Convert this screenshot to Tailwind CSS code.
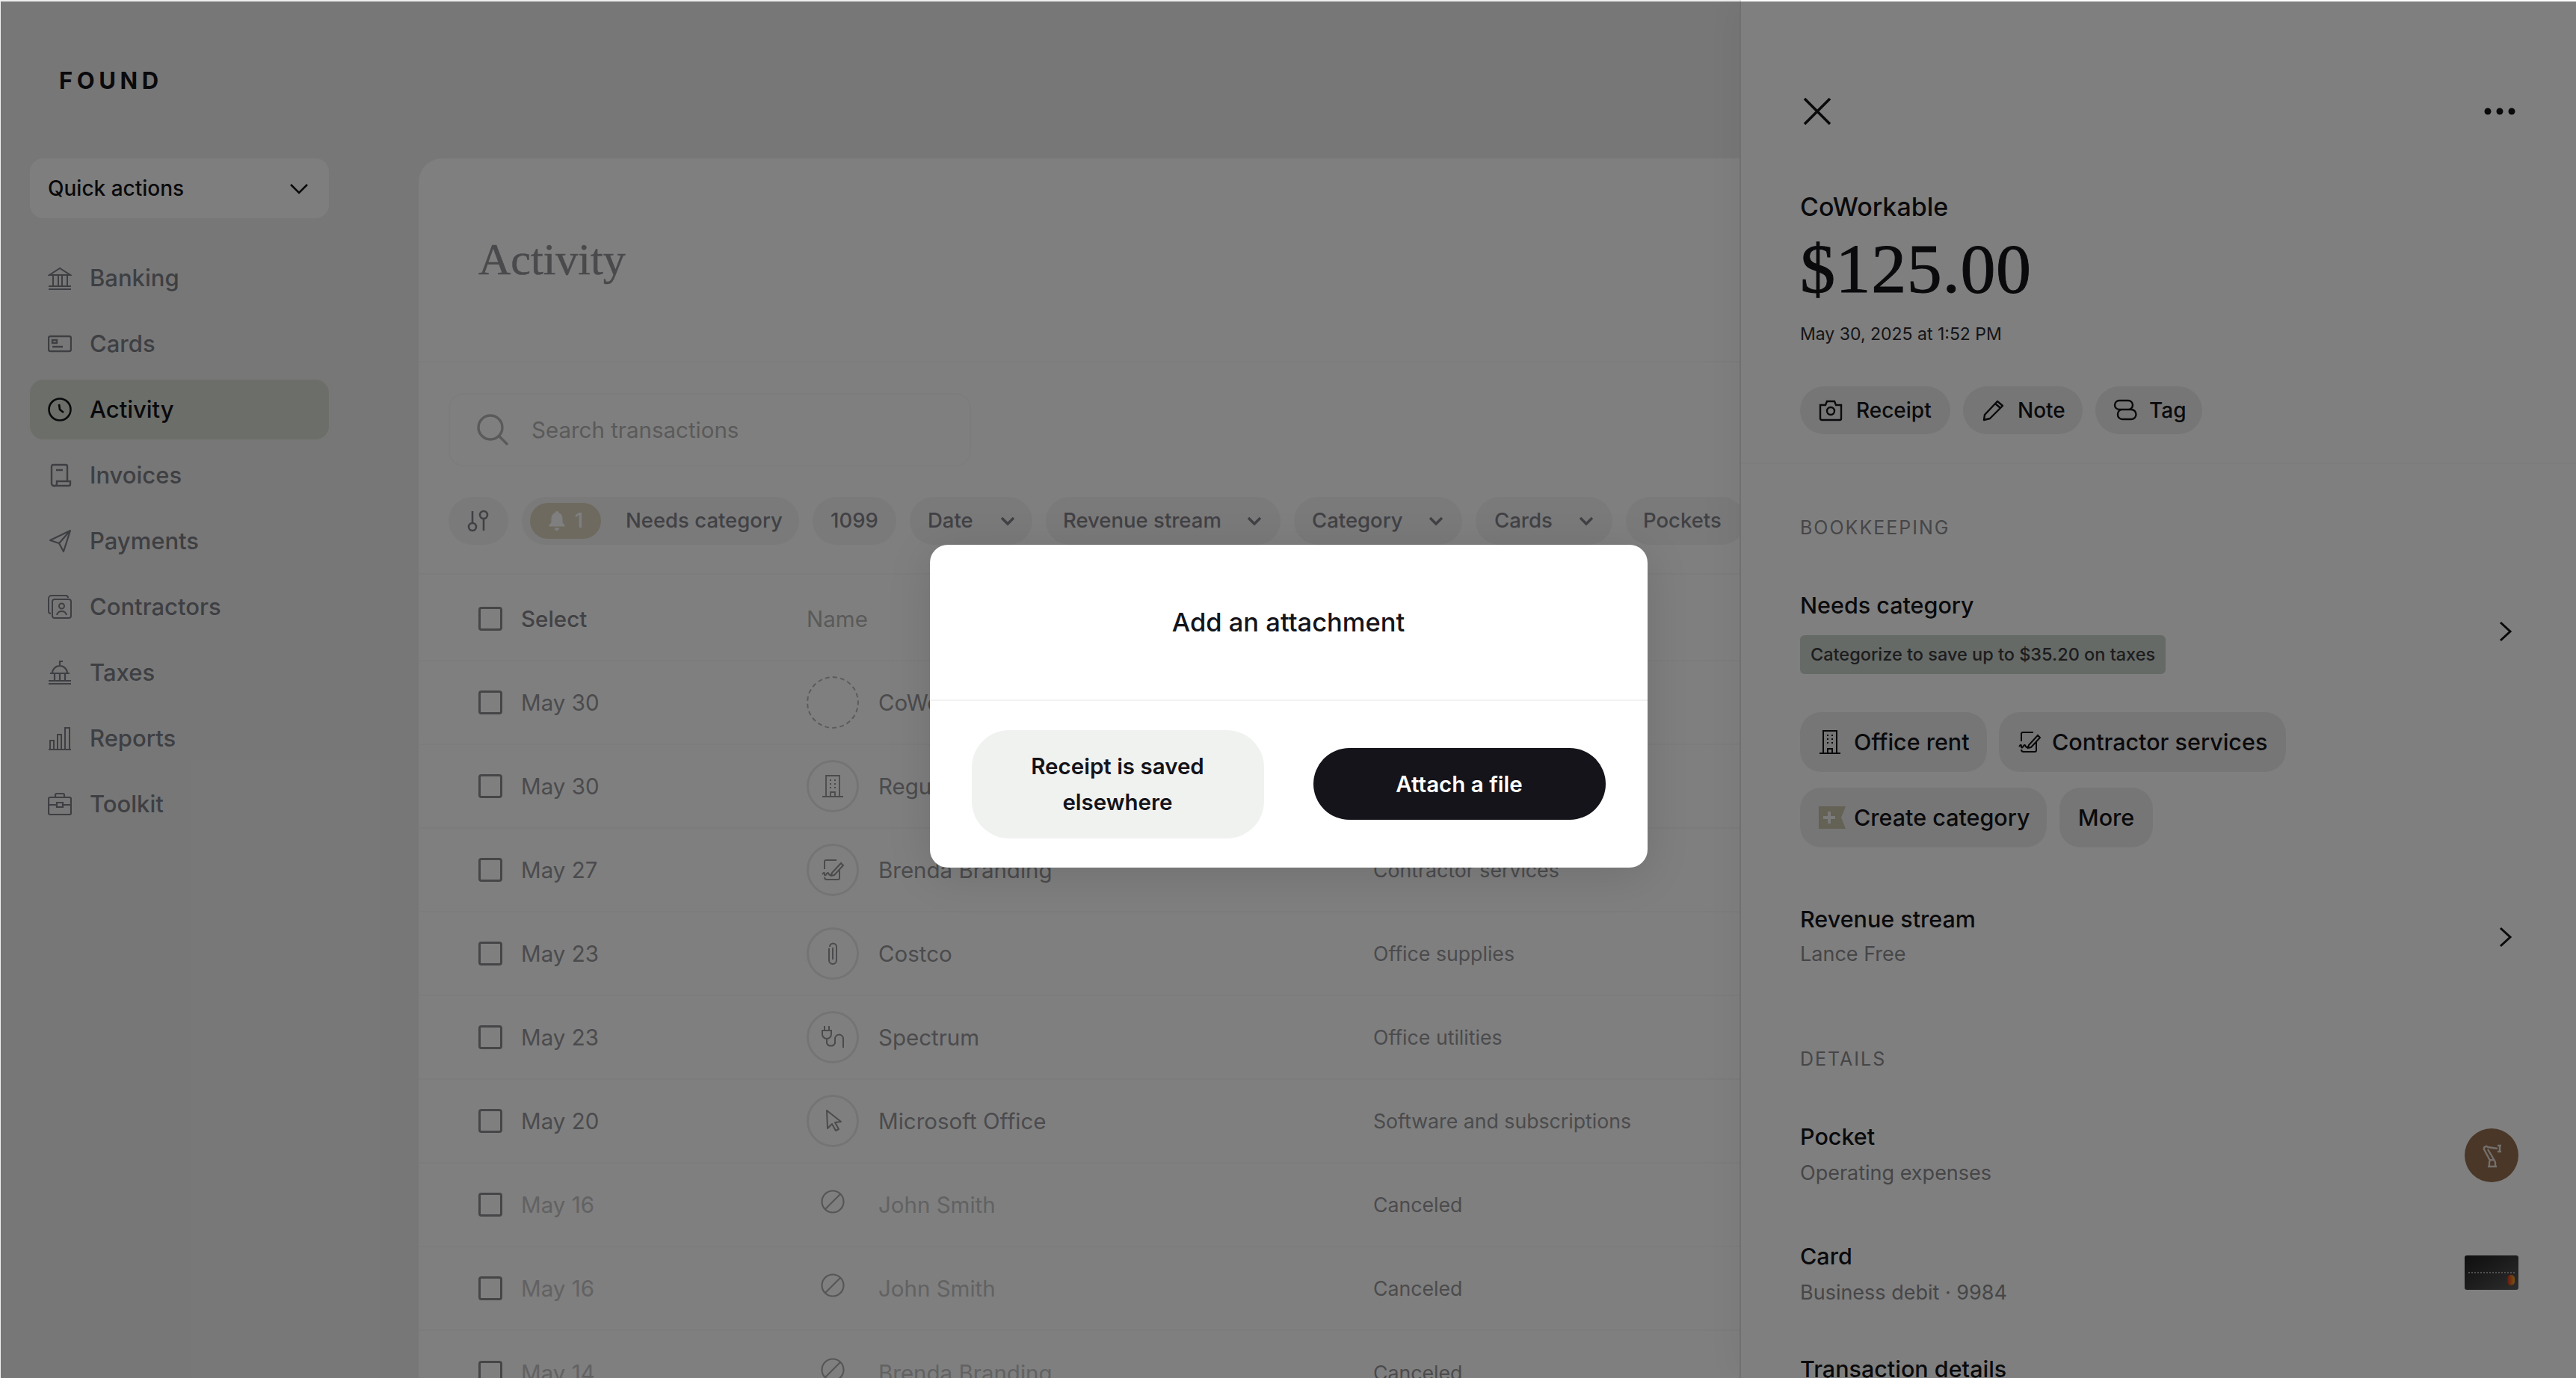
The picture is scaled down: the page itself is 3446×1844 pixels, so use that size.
<!DOCTYPE html>
<html lang="en">
<head>
    <meta charset="UTF-8">
    <title>Found - Activity</title>
    <script src="https://cdn.jsdelivr.net/npm/@tailwindcss/browser@4"></script>
</head>
<body class="bg-[#f4f4f4] font-['Inter','Liberation_Sans',sans-serif] text-[#141419] overflow-hidden">
    <div class="relative w-[3446px] h-[1844px] overflow-hidden flex bg-[#efefef]">

        <!-- Sidebar -->
        <aside class="w-[560px] shrink-0 px-[40px]">
            <div class="pt-[86px] pl-[39px] h-[212px] text-[31px] leading-[44px] font-bold tracking-[0.18em]">FOUND</div>
            <button class="w-[400px] h-[80px] rounded-[18px] bg-[#fdfdfd] flex items-center justify-between pl-[24px] pr-[26px] text-[28px] font-medium">
                Quick actions
                <svg class="w-[28px] h-[28px]" viewBox="0 0 28 28" fill="none" stroke="currentColor" stroke-width="2.6"><path d="M3 9l11 11L25 9"/></svg>
            </button>
            <nav class="w-[400px] mt-[40px] flex flex-col gap-[8px] text-[31px] font-medium text-[#7c7e86]">
                <a class="h-[80px] rounded-[18px] flex items-center gap-[24px] px-[24px]">
                    <svg class="w-[32px] h-[32px]" viewBox="0 0 32 32" fill="none" stroke="currentColor" stroke-width="2"><path d="M1 31h30M1 27h30M2 12L16 3l14 9zM7 12v15M14 12v15M19 12v15M26 12v15"/></svg>
                    Banking
                </a>
                <a class="h-[80px] rounded-[18px] flex items-center gap-[24px] px-[24px]">
                    <svg class="w-[32px] h-[32px]" viewBox="0 0 32 32" fill="none" stroke="currentColor" stroke-width="2.4"><rect x="1" y="6" width="30" height="20" rx="2.5"/><path d="M6 11h6v4H6zM6 20h14"/></svg>
                    Cards
                </a>
                <a class="h-[80px] rounded-[18px] flex items-center gap-[24px] px-[24px] bg-[#d8dcd2] text-[#141419]">
                    <svg class="w-[32px] h-[32px]" viewBox="0 0 32 32" fill="none" stroke="currentColor" stroke-width="2.6"><circle cx="16" cy="16" r="14.5"/><path d="M15 9l1 7 5 4"/></svg>
                    Activity
                </a>
                <a class="h-[80px] rounded-[18px] flex items-center gap-[24px] px-[24px]">
                    <svg class="w-[32px] h-[32px]" viewBox="0 0 32 32" fill="none" stroke="currentColor" stroke-width="2.4"><path d="M5 27V4a2 2 0 0 1 2-2h17a2 2 0 0 1 2 2v20M5 27a3 3 0 0 0 3 3h20a2 2 0 0 0 2-2v-4H12v3a3 3 0 0 1-7 0zM11 9h9"/></svg>
                    Invoices
                </a>
                <a class="h-[80px] rounded-[18px] flex items-center gap-[24px] px-[24px]">
                    <svg class="w-[32px] h-[32px]" viewBox="0 0 32 32" fill="none" stroke="currentColor" stroke-width="2.2" stroke-linejoin="round"><path d="M30 2L3 15l12 4 6 11zM30 2L15 19"/></svg>
                    Payments
                </a>
                <a class="h-[80px] rounded-[18px] flex items-center gap-[24px] px-[24px]">
                    <svg class="w-[32px] h-[32px]" viewBox="0 0 32 32" fill="none" stroke="currentColor" stroke-width="2"><path d="M27 4a3 3 0 0 0-3-3H5a4 4 0 0 0-4 4v17a3 3 0 0 0 3 3"/><rect x="6" y="6" width="25" height="25" rx="3"/><circle cx="18.500" cy="15" r="3.500"/><path d="M12 27c1-4 4-5 6.500-5s5.500 1 6.500 5"/></svg>
                    Contractors
                </a>
                <a class="h-[80px] rounded-[18px] flex items-center gap-[24px] px-[24px]">
                    <svg class="w-[32px] h-[32px]" viewBox="0 0 32 32" fill="none" stroke="currentColor" stroke-width="2.2"><path d="M1 31h30M1 27h30M3 17h26M6 17a10 10 0 0 1 20 0M16 7V1h4M9 17v10M16 17v10M23 17v10"/></svg>
                    Taxes
                </a>
                <a class="h-[80px] rounded-[18px] flex items-center gap-[24px] px-[24px]">
                    <svg class="w-[32px] h-[32px]" viewBox="0 0 32 32" fill="none" stroke="currentColor" stroke-width="2"><path d="M1 31h30M3 30V19h5v11M13 30V11h5v19M23 30V2h6v28"/></svg>
                    Reports
                </a>
                <a class="h-[80px] rounded-[18px] flex items-center gap-[24px] px-[24px]">
                    <svg class="w-[32px] h-[32px]" viewBox="0 0 32 32" fill="none" stroke="currentColor" stroke-width="2.2"><rect x="1" y="7" width="30" height="23" rx="2"/><path d="M10 7V4a2 2 0 0 1 2-2h8a2 2 0 0 1 2 2v3M1 17h11M20 17h11M12 14h8v6h-8z"/></svg>
                    Toolkit
                </a>
            </nav>
        </aside>

        <!-- Activity panel -->
        <main class="flex-1 min-w-0 mt-[212px] bg-white rounded-tl-[32px] overflow-hidden">
            <div class="h-[273px] border-b-2 border-[#f8f8f8] pl-[80px] pt-[99px]">
                <h1 class="font-['Liberation_Serif',serif] text-[60px] leading-[72px] text-[#94949a] [-webkit-text-stroke:0.5px]">Activity</h1>
            </div>
            <div class="px-[40px] pt-[41px]">
                <div class="w-[699px] h-[98px] rounded-[20px] border-2 border-[#f9f9f9] flex items-center pl-[36px] gap-[31px] text-[29.500px] text-[#b4b4b4]">
                    <svg class="w-[42px] h-[42px]" viewBox="0 0 42 42" fill="none" stroke="currentColor" stroke-width="3.4"><circle cx="18" cy="18" r="16"/><path d="M30 30l11 11"/></svg>
                    Search transactions
                </div>
            </div>
            <div class="h-[145px] border-b-2 border-[#f8f8f8] pl-[40px] pt-[41px] flex gap-[18px] text-[27.500px] font-medium text-[#82828a] whitespace-nowrap">
                <div class="w-[80px] h-[64px] rounded-full bg-[#f4f4f4] flex items-center justify-center shrink-0">
                    <svg class="w-[32px] h-[32px]" viewBox="0 0 32 32" fill="none" stroke="currentColor" stroke-width="2.6"><circle cx="8" cy="24" r="5"/><path d="M8 19V3"/><circle cx="23" cy="8" r="5"/><path d="M23 13v16"/></svg>
                </div>
                <div class="h-[64px] w-[371px] rounded-full bg-[#f4f4f4] flex items-center pl-[11px] shrink-0">
                    <span class="w-[95px] h-[48px] rounded-full bg-[#dcd4bf] flex items-center justify-center gap-[12px] text-white">
                        <svg class="w-[24px] h-[28px]" viewBox="0 0 24 28" fill="currentColor"><path d="M12 1c1.500 0 2.500 1 2.500 2.200C18 4.500 19.500 7.500 19.500 11v5l3 4v1.500h-21V20l3-4v-5c0-3.500 1.500-6.500 5-7.800C9.500 2 10.500 1 12 1zM9 23.500h6c0 2-1 3.500-3 3.500s-3-1.500-3-3.500z"/></svg>
                        1
                    </span>
                    <span class="ml-[33px]">Needs category</span>
                </div>
                <div class="h-[64px] w-[112px] rounded-full bg-[#f4f4f4] flex items-center justify-center shrink-0">1099</div>
                <div class="h-[64px] w-[164px] rounded-full bg-[#f4f4f4] flex items-center justify-between pl-[24px] pr-[22px] shrink-0">Date
                    <svg class="w-[22px] h-[22px]" viewBox="0 0 22 22" fill="none" stroke="currentColor" stroke-width="3.4"><path d="M3 7l8 8 8-8"/></svg>
                </div>
                <div class="h-[64px] w-[314px] rounded-full bg-[#f4f4f4] flex items-center justify-between pl-[23px] pr-[24px] shrink-0">Revenue stream
                    <svg class="w-[22px] h-[22px]" viewBox="0 0 22 22" fill="none" stroke="currentColor" stroke-width="3.4"><path d="M3 7l8 8 8-8"/></svg>
                </div>
                <div class="h-[64px] w-[225px] rounded-full bg-[#f4f4f4] flex items-center justify-between pl-[24px] pr-[24px] shrink-0">Category
                    <svg class="w-[22px] h-[22px]" viewBox="0 0 22 22" fill="none" stroke="currentColor" stroke-width="3.4"><path d="M3 7l8 8 8-8"/></svg>
                </div>
                <div class="h-[64px] w-[183px] rounded-full bg-[#f4f4f4] flex items-center justify-between pl-[25px] pr-[24px] shrink-0">Cards
                    <svg class="w-[22px] h-[22px]" viewBox="0 0 22 22" fill="none" stroke="currentColor" stroke-width="3.4"><path d="M3 7l8 8 8-8"/></svg>
                </div>
                <div class="h-[64px] w-[160px] rounded-full bg-[#f4f4f4] flex items-center pl-[23px] shrink-0">Pockets</div>
            </div>

            <!-- Table -->
            <div class="text-[29.500px] text-[#96969a]">
                <div class="h-[116px] pt-[4px] border-b-2 border-[#f8f8f8] flex items-center pl-[80px]">
                    <span class="w-[32px] h-[32px] rounded-[4px] border-[3px] border-[#8c8c90] shrink-0"></span>
                    <span class="w-[407px] pl-[25px] font-medium text-[#84848a]">Select</span>
                    <span class="text-[#b4b4b4]">Name</span>
                </div>

                <div class="h-[112px] border-b-2 border-[#f8f8f8] flex items-center pl-[80px]">
                    <span class="w-[32px] h-[32px] rounded-[4px] border-[3px] border-[#8c8c90] shrink-0"></span>
                    <span class="w-[407px] pl-[25px]">May 30</span>
                    <span class="w-[70px] h-[70px] rounded-full border-2 border-dashed border-[#b8b8b8] shrink-0"></span>
                    <span class="w-[688px] pl-[26px]">CoWorkable</span>
                    <span class="text-[26.700px]">Office rent</span>
                </div>
                <div class="h-[112px] border-b-2 border-[#f8f8f8] flex items-center pl-[80px]">
                    <span class="w-[32px] h-[32px] rounded-[4px] border-[3px] border-[#8c8c90] shrink-0"></span>
                    <span class="w-[407px] pl-[25px]">May 30</span>
                    <span class="w-[70px] h-[70px] rounded-full border-[3px] border-[#e8e8e8] shrink-0 flex items-center justify-center">
                        <svg class="w-[30px] h-[32px]" viewBox="0 0 30 32" fill="none" stroke="currentColor" stroke-width="1.800"><path d="M1 30h28M6 30V2h18v28M12 30v-6h6v6M11 8h2M17 8h2M11 13h2M17 13h2M11 18h2M17 18h2"/></svg>
                    </span>
                    <span class="w-[688px] pl-[26px]">Regus</span>
                    <span class="text-[26.700px]">Office rent</span>
                </div>
                <div class="h-[112px] border-b-2 border-[#f8f8f8] flex items-center pl-[80px]">
                    <span class="w-[32px] h-[32px] rounded-[4px] border-[3px] border-[#8c8c90] shrink-0"></span>
                    <span class="w-[407px] pl-[25px]">May 27</span>
                    <span class="w-[70px] h-[70px] rounded-full border-[3px] border-[#e8e8e8] shrink-0 flex items-center justify-center">
                        <svg class="w-[32px] h-[32px]" viewBox="0 0 32 32" fill="none" stroke="currentColor" stroke-width="2"><path d="M5 15V5a2 2 0 0 1 2-2h14M25 15v12a2 2 0 0 1-2 2H8a3 3 0 0 1-3-3M2 22c2-3 3-3 3 0s2 1 3-1 2-1 3 1 2 1 4-1M15 20l-1 4 4-1L30 10l-3-3z"/></svg>
                    </span>
                    <span class="w-[688px] pl-[26px]">Brenda Branding</span>
                    <span class="text-[26.700px]">Contractor services</span>
                </div>
                <div class="h-[112px] border-b-2 border-[#f8f8f8] flex items-center pl-[80px]">
                    <span class="w-[32px] h-[32px] rounded-[4px] border-[3px] border-[#8c8c90] shrink-0"></span>
                    <span class="w-[407px] pl-[25px]">May 23</span>
                    <span class="w-[70px] h-[70px] rounded-full border-[3px] border-[#e8e8e8] shrink-0 flex items-center justify-center">
                        <svg class="w-[32px] h-[32px]" viewBox="0 0 32 32" fill="none" stroke="currentColor" stroke-width="2"><path d="M11 9v16a5 5 0 0 0 10 0V7a4.500 4.500 0 0 0-9 0M16 8v16"/></svg>
                    </span>
                    <span class="w-[688px] pl-[26px]">Costco</span>
                    <span class="text-[26.700px]">Office supplies</span>
                </div>
                <div class="h-[112px] border-b-2 border-[#f8f8f8] flex items-center pl-[80px]">
                    <span class="w-[32px] h-[32px] rounded-[4px] border-[3px] border-[#8c8c90] shrink-0"></span>
                    <span class="w-[407px] pl-[25px]">May 23</span>
                    <span class="w-[70px] h-[70px] rounded-full border-[3px] border-[#e8e8e8] shrink-0 flex items-center justify-center">
                        <svg class="w-[32px] h-[32px]" viewBox="0 0 32 32" fill="none" stroke="currentColor" stroke-width="2"><path d="M5 1v6M11 1v6M2 7h12v5a6 6 0 0 1-12 0zM8 18v6a6 6 0 0 0 11 0v-6a5.500 5.500 0 0 1 11 0v12"/></svg>
                    </span>
                    <span class="w-[688px] pl-[26px]">Spectrum</span>
                    <span class="text-[26.700px]">Office utilities</span>
                </div>
                <div class="h-[112px] border-b-2 border-[#f8f8f8] flex items-center pl-[80px]">
                    <span class="w-[32px] h-[32px] rounded-[4px] border-[3px] border-[#8c8c90] shrink-0"></span>
                    <span class="w-[407px] pl-[25px]">May 20</span>
                    <span class="w-[70px] h-[70px] rounded-full border-[3px] border-[#e8e8e8] shrink-0 flex items-center justify-center">
                        <svg class="w-[32px] h-[32px]" viewBox="0 0 32 32" fill="none" stroke="currentColor" stroke-width="2" stroke-linejoin="round"><path d="M8 2l19 15-8 1 5 9-4 2-5-9-6 6z"/></svg>
                    </span>
                    <span class="w-[688px] pl-[26px]">Microsoft Office</span>
                    <span class="text-[26.700px]">Software and subscriptions</span>
                </div>
                <div class="h-[112px] border-b-2 border-[#f8f8f8] flex items-center pl-[80px] text-[#c4c4c6]">
                    <span class="w-[32px] h-[32px] rounded-[4px] border-[3px] border-[#8c8c90] shrink-0"></span>
                    <span class="w-[407px] pl-[25px]">May 16</span>
                    <span class="w-[70px] h-[70px] shrink-0 flex items-center justify-center pb-[8px] text-[#acacac]">
                        <svg class="w-[32px] h-[32px]" viewBox="0 0 32 32" fill="none" stroke="currentColor" stroke-width="2.200"><circle cx="16" cy="16" r="14.500"/><path d="M6 26L26 6"/></svg>
                    </span>
                    <span class="w-[688px] pl-[26px]">John Smith</span>
                    <span class="text-[26.700px] text-[#96969a]">Canceled</span>
                </div>
                <div class="h-[112px] border-b-2 border-[#f8f8f8] flex items-center pl-[80px] text-[#c4c4c6]">
                    <span class="w-[32px] h-[32px] rounded-[4px] border-[3px] border-[#8c8c90] shrink-0"></span>
                    <span class="w-[407px] pl-[25px]">May 16</span>
                    <span class="w-[70px] h-[70px] shrink-0 flex items-center justify-center pb-[8px] text-[#acacac]">
                        <svg class="w-[32px] h-[32px]" viewBox="0 0 32 32" fill="none" stroke="currentColor" stroke-width="2.200"><circle cx="16" cy="16" r="14.500"/><path d="M6 26L26 6"/></svg>
                    </span>
                    <span class="w-[688px] pl-[26px]">John Smith</span>
                    <span class="text-[26.700px] text-[#96969a]">Canceled</span>
                </div>
                <div class="h-[112px] flex items-center pl-[80px] text-[#c4c4c6]">
                    <span class="w-[32px] h-[32px] rounded-[4px] border-[3px] border-[#8c8c90] shrink-0"></span>
                    <span class="w-[407px] pl-[25px]">May 14</span>
                    <span class="w-[70px] h-[70px] shrink-0 flex items-center justify-center pb-[8px] text-[#acacac]">
                        <svg class="w-[32px] h-[32px]" viewBox="0 0 32 32" fill="none" stroke="currentColor" stroke-width="2.200"><circle cx="16" cy="16" r="14.500"/><path d="M6 26L26 6"/></svg>
                    </span>
                    <span class="w-[688px] pl-[26px]">Brenda Branding</span>
                    <span class="text-[26.700px] text-[#96969a]">Canceled</span>
                </div>
            </div>
        </main>

        <!-- Transaction drawer -->
        <section class="w-[1119px] shrink-0 bg-white border-l-2 border-[#e0e0e0] shadow-[-16px_0_40px_rgba(0,0,0,0.04)] z-10">
            <div class="h-[621px] border-b-2 border-[#f8f8f8] px-[79px]">
                <div class="h-[212px] flex items-start justify-between pt-[130px] pr-[2px]">
                    <svg class="w-[38px] h-[38px] ml-[4px]" viewBox="0 0 38 38" fill="none" stroke="currentColor" stroke-width="3.600"><path d="M2 2l34 34M36 2L2 36"/></svg>
                    <svg class="w-[42px] h-[10px] mt-[14px]" viewBox="0 0 42 10" fill="currentColor"><circle cx="5" cy="5" r="4.500"/><circle cx="21" cy="5" r="4.500"/><circle cx="37" cy="5" r="4.500"/></svg>
                </div>
                <div class="text-[34px] leading-[44px] font-medium mt-[43px]">CoWorkable</div>
                <div class="font-['Liberation_Serif',serif] text-[94px] leading-[100px] mt-[10px] tracking-[0.6px] [-webkit-text-stroke:1px]">$125.00</div>
                <div class="text-[23px] leading-[32px] mt-[22px] text-[#2a2a2e]">May 30, 2025 at 1:52 PM</div>
                <div class="flex gap-[17px] mt-[54px] text-[28px] font-medium">
                    <span class="h-[64px] w-[201px] rounded-full bg-[#ececec] flex items-center pl-[25px] gap-[18px]">
                        <svg class="w-[32px] h-[32px]" viewBox="0 0 32 32" fill="none" stroke="currentColor" stroke-width="2.400"><path d="M2 9h7l2-5h10l2 5h7v18a2 2 0 0 1-2 2H4a2 2 0 0 1-2-2z"/><circle cx="16" cy="17" r="5"/></svg>
                        Receipt
                    </span>
                    <span class="h-[64px] w-[160px] rounded-full bg-[#ececec] flex items-center pl-[25px] gap-[16px]">
                        <svg class="w-[32px] h-[32px]" viewBox="0 0 32 32" fill="none" stroke="currentColor" stroke-width="2.400" stroke-linejoin="round"><path d="M3 29l1-7L21 4l7 6-17 17zM18 7l7 6"/></svg>
                        Note
                    </span>
                    <span class="h-[64px] w-[143px] rounded-full bg-[#ececec] flex items-center pl-[24px] gap-[16px]">
                        <svg class="w-[32px] h-[32px]" viewBox="0 0 32 32" fill="none" stroke="currentColor" stroke-width="2.400"><path d="M8 3h12a6 6 0 0 1 0 12H8a6 6 0 0 1 0-12zM12 15H8M12 15h12a6 6 0 0 1 0 13H12a6 6 0 0 1-6-6v-1a6 6 0 0 1 6-6z"/></svg>
                        Tag
                    </span>
                </div>
            </div>
            <div class="px-[79px] pt-[68px]">
                <div class="text-[25px] leading-[34px] tracking-[0.08em] text-[#8c8c90]">BOOKKEEPING</div>
                <div class="mt-[66px] flex items-center justify-between pr-[6px]">
                    <div>
                        <div class="text-[30.500px] leading-[42px] font-medium">Needs category</div>
                        <div class="mt-[19px] w-[489px] h-[52px] rounded-[6px] bg-[#ccd4cc] flex items-center pl-[14px] text-[23.500px] font-medium text-[#3a3a3e]">Categorize to save up to $35.20 on taxes</div>
                    </div>
                    <svg class="w-[18px] h-[28px] mb-[2px]" viewBox="0 0 18 28" fill="none" stroke="currentColor" stroke-width="3"><path d="M2 2l13 12L2 26"/></svg>
                </div>
                <div class="flex gap-[16px] mt-[51px] text-[30.500px] font-medium">
                    <span class="h-[80px] w-[250px] rounded-[28px] bg-[#ececec] flex items-center pl-[25px] gap-[17px]">
                        <svg class="w-[30px] h-[34px]" viewBox="0 0 30 34" fill="none" stroke="currentColor" stroke-width="2"><path d="M1 32h28M6 32V2h18v30M12 32v-6h6v6M11 8h2M17 8h2M11 13h2M17 13h2M11 18h2M17 18h2"/></svg>
                        Office rent
                    </span>
                    <span class="h-[80px] w-[384px] rounded-[28px] bg-[#ececec] flex items-center pl-[25px] gap-[14px]">
                        <svg class="w-[32px] h-[32px] shrink-0" viewBox="0 0 32 32" fill="none" stroke="currentColor" stroke-width="2"><path d="M5 15V5a2 2 0 0 1 2-2h14M25 15v12a2 2 0 0 1-2 2H8a3 3 0 0 1-3-3M2 22c2-3 3-3 3 0s2 1 3-1 2-1 3 1 2 1 4-1M15 20l-1 4 4-1L30 10l-3-3z"/></svg>
                        Contractor services
                    </span>
                </div>
                <div class="flex gap-[17px] mt-[21px] text-[30.500px] font-medium">
                    <span class="h-[80px] w-[330px] rounded-[28px] bg-[#ececec] flex items-center pl-[25px] gap-[11px]">
                        <svg class="w-[36px] h-[30px]" viewBox="0 0 36 30"><path d="M0 0h36l-6 15 6 15H0z" fill="#c8c2aa"/><path d="M14 7v16M6 15h16" stroke="#f4f4f4" stroke-width="4"/></svg>
                        Create category
                    </span>
                    <span class="h-[80px] w-[125px] rounded-[28px] bg-[#ececec] flex items-center justify-center">More</span>
                </div>
                <div class="mt-[75px] flex items-center justify-between pr-[6px]">
                    <div>
                        <div class="text-[30.500px] leading-[42px] font-medium">Revenue stream</div>
                        <div class="mt-[5px] text-[27px] leading-[42px] text-[#8c8c90]">Lance Free</div>
                    </div>
                    <svg class="w-[18px] h-[28px]" viewBox="0 0 18 28" fill="none" stroke="currentColor" stroke-width="3"><path d="M2 2l13 12L2 26"/></svg>
                </div>
                <div class="mt-[102px] text-[25px] leading-[34px] tracking-[0.08em] text-[#8c8c90]">DETAILS</div>
                <div class="mt-[66px] flex items-center justify-between">
                    <div>
                        <div class="text-[30.500px] leading-[42px] font-medium">Pocket</div>
                        <div class="mt-[7px] text-[27px] leading-[42px] text-[#8c8c90]">Operating expenses</div>
                    </div>
                    <span class="w-[72px] h-[72px] mr-[-2px] rounded-full bg-[#946e50] flex items-center justify-center text-[#e8dfd6]">
                        <svg class="w-[34px] h-[34px]" viewBox="0 0 34 34" fill="none" stroke="currentColor" stroke-width="2.400"><path d="M12 32h12M14 32v-5a4 4 0 0 1 8 0v5M15 24L7 9a3 3 0 0 1 5-3l13 2M28 3v10M25 4h5M25 12h5M12 9l9 15"/></svg>
                    </span>
                </div>
                <div class="mt-[69px] flex items-center justify-between">
                    <div>
                        <div class="text-[30.500px] leading-[42px] font-medium">Card</div>
                        <div class="mt-[7px] text-[27px] leading-[42px] text-[#8c8c90]">Business debit · 9984</div>
                    </div>
                    <span class="relative w-[72px] h-[46px] mr-[-2px] mb-[6px] rounded-[3px] bg-gradient-to-br from-[#1e1e1e] to-[#5a5a5a]">
                        <span class="absolute left-[5px] right-[5px] top-[22px] h-[2px] border-t-2 border-dotted border-[#a0a0a0]"></span>
                        <span class="absolute right-[5px] bottom-[6px] w-[10px] h-[14px] rounded-full bg-gradient-to-r from-[#d02020] to-[#f0a020]"></span>
                    </span>
                </div>
                <div class="mt-[60px] text-[30.500px] leading-[42px] font-medium">Transaction details</div>
            </div>
        </section>

        <!-- Scrim and dialog -->
        <div class="absolute left-[1px] top-[2px] right-0 bottom-0 z-20 bg-black/50 flex justify-center items-start pt-[727px]">
            <div class="w-[960px] h-[432px] rounded-[24px] bg-white shadow-[0_10px_60px_rgba(0,0,0,0.12)] flex flex-col">
                <div class="h-[209px] border-b-2 border-[#f1f2f1] flex items-center justify-center text-[34.500px] font-medium">Add an attachment</div>
                <div class="flex-1 flex items-center justify-between px-[56px] pb-[1px] text-[29.500px] font-semibold">
                    <button class="w-[391px] h-[145px] rounded-[50px] bg-[#f0f2f0] leading-[48px] px-[60px]">Receipt is saved elsewhere</button>
                    <button class="w-[391px] h-[96px] rounded-full bg-[#14141a] text-white">Attach a file</button>
                </div>
            </div>
        </div>
    </div>
</body>
</html>
